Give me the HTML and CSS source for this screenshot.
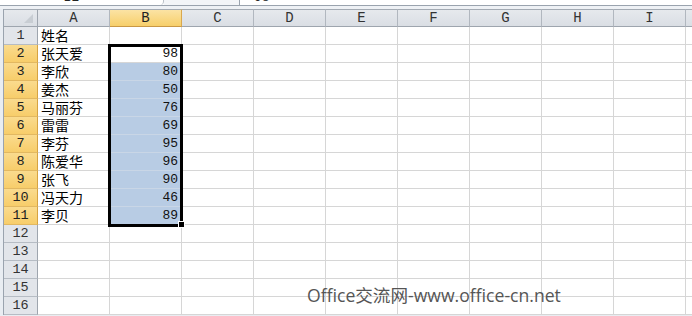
FILE: index.html
```html
<!DOCTYPE html>
<html><head><meta charset="utf-8"><link rel="stylesheet" href="styles.css"></head>
<body>
<div class="app">
  <div class="fbar">
    <div class="namebox"><span class="cut">B2</span></div>
    <div class="fxgap"></div>
    <div class="formula"><span class="cut">98</span></div>
  </div>
  <div class="fsep"></div>
  <div class="sheet">
    <div class="grid">
      <div class="ch corner"><span class="tri"></span></div><div class="ch">A</div><div class="ch sel">B</div><div class="ch">C</div><div class="ch">D</div><div class="ch">E</div><div class="ch">F</div><div class="ch">G</div><div class="ch">H</div><div class="ch">I</div><div class="ch end"></div>

      <div class="rh">1</div><div class="c t">姓名</div><div class="c"></div><div class="c"></div><div class="c"></div><div class="c"></div><div class="c"></div><div class="c"></div><div class="c"></div><div class="c"></div><div class="c end"></div>
      <div class="rh sel">2</div><div class="c t">张天爱</div><div class="c n">98</div><div class="c"></div><div class="c"></div><div class="c"></div><div class="c"></div><div class="c"></div><div class="c"></div><div class="c"></div><div class="c end"></div>
      <div class="rh sel">3</div><div class="c t">李欣</div><div class="c n hl">80</div><div class="c"></div><div class="c"></div><div class="c"></div><div class="c"></div><div class="c"></div><div class="c"></div><div class="c"></div><div class="c end"></div>
      <div class="rh sel">4</div><div class="c t">姜杰</div><div class="c n hl">50</div><div class="c"></div><div class="c"></div><div class="c"></div><div class="c"></div><div class="c"></div><div class="c"></div><div class="c"></div><div class="c end"></div>
      <div class="rh sel">5</div><div class="c t">马丽芬</div><div class="c n hl">76</div><div class="c"></div><div class="c"></div><div class="c"></div><div class="c"></div><div class="c"></div><div class="c"></div><div class="c"></div><div class="c end"></div>
      <div class="rh sel">6</div><div class="c t">雷雷</div><div class="c n hl">69</div><div class="c"></div><div class="c"></div><div class="c"></div><div class="c"></div><div class="c"></div><div class="c"></div><div class="c"></div><div class="c end"></div>
      <div class="rh sel">7</div><div class="c t">李芬</div><div class="c n hl">95</div><div class="c"></div><div class="c"></div><div class="c"></div><div class="c"></div><div class="c"></div><div class="c"></div><div class="c"></div><div class="c end"></div>
      <div class="rh sel">8</div><div class="c t">陈爱华</div><div class="c n hl">96</div><div class="c"></div><div class="c"></div><div class="c"></div><div class="c"></div><div class="c"></div><div class="c"></div><div class="c"></div><div class="c end"></div>
      <div class="rh sel">9</div><div class="c t">张飞</div><div class="c n hl">90</div><div class="c"></div><div class="c"></div><div class="c"></div><div class="c"></div><div class="c"></div><div class="c"></div><div class="c"></div><div class="c end"></div>
      <div class="rh sel">10</div><div class="c t">冯天力</div><div class="c n hl">46</div><div class="c"></div><div class="c"></div><div class="c"></div><div class="c"></div><div class="c"></div><div class="c"></div><div class="c"></div><div class="c end"></div>
      <div class="rh sel">11</div><div class="c t">李贝</div><div class="c n hl">89</div><div class="c"></div><div class="c"></div><div class="c"></div><div class="c"></div><div class="c"></div><div class="c"></div><div class="c"></div><div class="c end"></div>
      <div class="rh">12</div><div class="c"></div><div class="c"></div><div class="c"></div><div class="c"></div><div class="c"></div><div class="c"></div><div class="c"></div><div class="c"></div><div class="c"></div><div class="c end"></div>
      <div class="rh">13</div><div class="c"></div><div class="c"></div><div class="c"></div><div class="c"></div><div class="c"></div><div class="c"></div><div class="c"></div><div class="c"></div><div class="c"></div><div class="c end"></div>
      <div class="rh">14</div><div class="c"></div><div class="c"></div><div class="c"></div><div class="c"></div><div class="c"></div><div class="c"></div><div class="c"></div><div class="c"></div><div class="c"></div><div class="c end"></div>
      <div class="rh">15</div><div class="c"></div><div class="c"></div><div class="c"></div><div class="c"></div><div class="c"></div><div class="c"></div><div class="c"></div><div class="c"></div><div class="c"></div><div class="c end"></div>
      <div class="rh">16</div><div class="c"></div><div class="c"></div><div class="c"></div><div class="c"></div><div class="c"></div><div class="c"></div><div class="c"></div><div class="c"></div><div class="c"></div><div class="c end"></div>
    </div>
    <div class="selbox"></div>
    <div class="handle"></div>
    <div class="wm">Office交流网-www.office-cn.net</div>
  </div>
</div>
</body></html>
```
FILE: styles.css
```css
html,body{margin:0;padding:0;background:#fff}
.app{width:692px;height:316px;overflow:hidden;background:#e9edf2}
.fbar{display:flex;height:5px;background:#fff;overflow:hidden;border-bottom:1px solid #9aa3ae}
.namebox{width:164px;border-right:1px solid #b9c0c8;border-bottom-right-radius:4px;display:flex;justify-content:center;padding-right:20px;box-sizing:border-box}
.fxgap{width:75px;background:#f3f5f8;border-right:1px solid #9aa3ae}
.formula{flex:1;padding-left:14px}
.cut{display:block;margin-top:-9px;font:13px/13px "Liberation Mono",monospace;color:#222}
.fsep{height:3px;background:#eef1f5}
.sheet{position:relative;padding-left:3px;background:#e9edf2}
.grid{display:grid;grid-template-columns:34px repeat(9,72px) 1fr;grid-auto-rows:18px;border-left:1px solid #9aa3ae;background:#fff}
.ch{background:linear-gradient(#e6e9ed,#dadee4);border-top:1px solid #a3aab3;border-right:1px solid #b1b7bf;border-bottom:1px solid #9ea5ae;box-sizing:border-box;display:flex;align-items:center;justify-content:center;font:14px "Liberation Mono",monospace;color:#333}
.ch.corner{justify-content:flex-end;align-items:flex-end;padding:0 4px 3px 0;border-right-color:#9ea5ae}
.tri{width:0;height:0;border-left:9px solid transparent;border-bottom:9px solid #c8cdd3}
.ch.sel{background:linear-gradient(#fbe3a4,#f7cf6a);border-right-color:#d9a84e;border-bottom-color:#c99845;color:#222}
.ch.end{border-right:none}
.rh{background:#e2e5ea;border-right:1px solid #9ea5ae;border-bottom:1px solid #b6bcc4;box-sizing:border-box;display:flex;align-items:center;justify-content:center;font:13.5px "Liberation Mono",monospace;color:#333}
.rh.sel{background:linear-gradient(#fadb8e,#f7cd6a);border-bottom-color:#e2b861;border-right-color:#d6a342;color:#222}
.c{border-right:1px solid #d6d6d6;border-bottom:1px solid #d6d6d6;box-sizing:border-box;white-space:nowrap}
.c.end{border-right:none}
.t{font:14px/17px "Noto Sans CJK SC",sans-serif;color:#000;padding-left:3px}
.n{font:13px/18px "Liberation Mono",monospace;color:#111;text-align:right;padding-right:3px}
.hl{background:#b8cce4;border-bottom-color:#c9d6e6;border-right-color:#b8cce4}
.selbox{position:absolute;left:108px;top:35px;width:75px;height:183px;border:3px solid #000;box-sizing:border-box;pointer-events:none}
.handle{position:absolute;left:178px;top:212px;width:5px;height:5px;background:#000;border:1px solid #fff}
.wm{position:absolute;left:307px;top:275px;font:17.6px/22px "Open Sans","Noto Sans CJK SC",sans-serif;color:#555}
```
